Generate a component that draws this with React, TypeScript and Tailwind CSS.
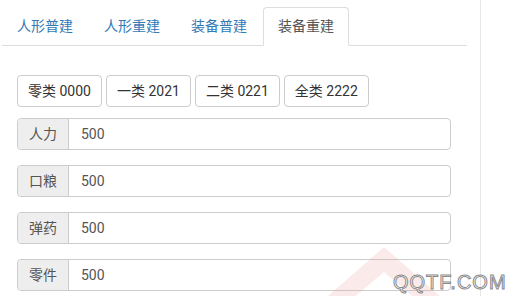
import React from 'react';

const tabs = ['人形普建', '人形重建', '装备普建', '装备重建'];
const presets = ['零类 0000', '一类 2021', '二类 0221', '全类 2222'];
const fields = ['人力', '口粮', '弹药', '零件'];

export default function App() {
  return (
    <div
      className="relative flex h-[296px] w-[514px] overflow-hidden bg-white text-[14px] text-[#333]"
      style={{ fontFamily: 'Roboto, "Noto Sans CJK SC", sans-serif' }}
    >
      <div className="w-[481px] shrink-0 border-r border-[#e6e6e6] pl-[2px]">
        <div className="w-[465px]">
          {/* 标签页 */}
          <ul className="mt-[7px] flex border-b border-[#ddd]">
            {tabs.map((t, i) => {
              const active = i === tabs.length - 1;
              return (
                <li key={t} className="-mb-px mr-[1px]">
                  <span
                    className={`block rounded-t-[4px] border px-[14px] py-[9px] leading-[19px] ${
                      active ? 'border-[#ddd] border-b-white bg-white text-[#555]' : 'border-transparent text-[#337ab7]'
                    }`}
                  >
                    {t}
                  </span>
                </li>
              );
            })}
          </ul>

          <div className="pl-[15px] pt-[29px]">
            <div className="flex gap-[4px]">
              {presets.map((p) => (
                <button
                  key={p}
                  className="rounded-[4px] border border-[#ccc] bg-white px-[10px] py-[6px] leading-[18px] text-[#333]"
                >
                  {p}
                </button>
              ))}
            </div>

            <div className="mt-[11px] flex flex-col gap-[15px]">
              {fields.map((f) => (
                <div key={f} className="flex h-[32px] w-[434px] rounded-[4px] border border-[#ccc]">
                  <span className="flex w-[51px] items-center justify-center rounded-l-[4px] border-r border-[#ccc] bg-[#eee] text-[#555]">
                    {f}
                  </span>
                  <span className="flex items-center pl-[12px] text-[#555]">500</span>
                </div>
              ))}
            </div>
          </div>
        </div>
      </div>

      {/* 水印 */}
      <svg className="absolute left-[314px] top-[244px]" width="140" height="60" viewBox="0 0 140 60">
        <path d="M70 3 L135 60 L108 60 L70 28 L32 60 L5 60 Z" fill="#e8a0a0" opacity="0.22" />
      </svg>
      <span
        className="absolute left-[393px] top-[271px] text-[20px] leading-[22px] tracking-[1px] text-white"
        style={{ WebkitTextStroke: '1px #8a8a8a', fontFamily: '"Liberation Sans", sans-serif' }}
      >
        QQTF.COM
      </span>
    </div>
  );
}
